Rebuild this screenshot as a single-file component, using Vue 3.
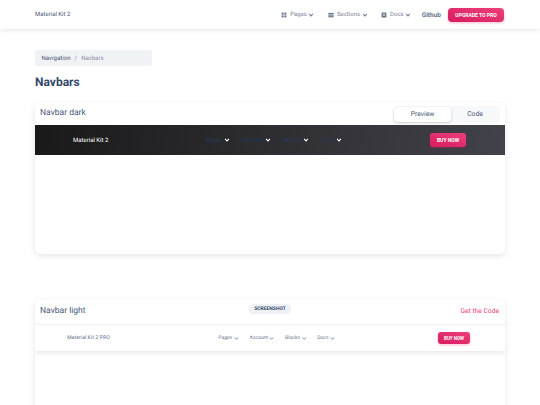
<template>
  <div class="page">
    <header class="topbar">
      <span class="brand">Material Kit 2</span>
      <nav class="topnav">
        <a v-for="item in topLinks" :key="item.label" class="toplink">
          <svg class="ico" viewBox="0 0 10 10" v-html="item.icon"></svg>
          <span>{{ item.label }}</span>
          <svg class="chev" viewBox="0 0 10 10"><path d="M1.8 3.2 5 6.6 8.2 3.2" /></svg>
        </a>
        <a class="github">Github</a>
        <button class="btn upgrade">UPGRADE TO PRO</button>
      </nav>
    </header>

    <main class="content">
      <div class="crumbs">
        <span>Navigation</span><i>/</i><span class="current">Navbars</span>
      </div>
      <h1>Navbars</h1>

      <section class="card first">
        <div class="card-head">
          <h2>Navbar dark</h2>
          <div class="tabs">
            <span class="tab active">Preview</span>
            <span class="tab">Code</span>
          </div>
        </div>
        <div class="demo dark">
          <span class="demo-brand">Material Kit 2</span>
          <div class="demo-links">
            <a v-for="l in demoLinks" :key="l">{{ l }}
              <svg class="chev" viewBox="0 0 10 10"><path d="M1.8 3.2 5 6.6 8.2 3.2" /></svg>
            </a>
          </div>
          <button class="btn buy">BUY NOW</button>
        </div>
      </section>

      <section class="card second">
        <div class="card-head light-head">
          <h2>Navbar light</h2>
          <span class="badge">SCREENSHOT</span>
          <a class="get-code">Get the Code</a>
        </div>
        <div class="demo light">
          <span class="demo-brand">Material Kit 2 PRO</span>
          <div class="demo-links">
            <a v-for="l in demoLinks" :key="l">{{ l }}
              <svg class="chev" viewBox="0 0 10 10"><path d="M1.8 3.2 5 6.6 8.2 3.2" /></svg>
            </a>
          </div>
          <button class="btn buy small">BUY NOW</button>
        </div>
      </section>
    </main>
  </div>
</template>

<script setup>
const topLinks = [
  {
    label: 'Pages',
    icon: '<rect x="1" y="1" width="3.4" height="3.4"/><rect x="5.6" y="1" width="3.4" height="3.4"/><rect x="1" y="5.6" width="3.4" height="3.4"/><rect x="5.6" y="5.6" width="3.4" height="3.4"/>',
  },
  {
    label: 'Sections',
    icon: '<rect x="0.5" y="1.5" width="9" height="2"/><rect x="0.5" y="4.2" width="9" height="2"/><rect x="0.5" y="6.9" width="9" height="2"/>',
  },
  {
    label: 'Docs',
    icon: '<path fill-rule="evenodd" d="M1 1h8v8H1zM3 3v1h4V3zM3 5v1h4V5z"/>',
  },
]
const demoLinks = ['Pages', 'Account', 'Blocks', 'Docs']
</script>

<style>
html,
body {
  margin: 0;
  background: #fff;
  overflow: hidden;
}
</style>

<style scoped>
.page {
  width: 540px;
  height: 405px;
  overflow: hidden;
  font-family: Roboto, "Liberation Sans", sans-serif;
  color: #344767;
  text-rendering: geometricPrecision;
}
.topbar {
  height: 29px;
  box-sizing: border-box;
  padding: 0 36px 0 35px;
  display: flex;
  align-items: center;
  justify-content: space-between;
  box-shadow: 0 1px 5px rgba(0, 0, 0, 0.1);
}
.brand {
  font-size: 6px;
  color: #4b5875;
}
.topnav {
  display: flex;
  align-items: center;
}
.toplink {
  display: flex;
  align-items: center;
  gap: 1.5px;
  font-size: 6px;
  color: #7b809a;
  margin-right: 13.5px;
}
.toplink:nth-of-type(3) {
  margin-right: 10.5px;
}
.ico {
  width: 6px;
  height: 6px;
  margin-right: 1.5px;
  fill: #67748e;
}
.chev {
  width: 6px;
  height: 6px;
  fill: none;
  stroke: currentColor;
  stroke-width: 1.7;
}
.github {
  font-size: 6.5px;
  font-weight: 700;
  color: #67748e;
  margin-right: 7px;
}
.btn {
  border: 0;
  padding: 0;
  font-family: inherit;
  font-weight: 700;
  color: #fff;
  background: linear-gradient(195deg, #ec407a, #d81b60);
  box-shadow: 0 1px 3px rgba(233, 30, 99, 0.3);
}
.upgrade {
  width: 56px;
  height: 14px;
  border-radius: 4px;
  font-size: 5px;
}
.content {
  width: 470px;
  margin: 0 auto;
  padding-top: 21px;
}
.crumbs {
  width: 117px;
  height: 16px;
  box-sizing: border-box;
  padding-left: 6.5px;
  display: flex;
  align-items: center;
  background: #f0f2f5;
  border-radius: 2px;
  font-size: 6.1px;
  color: #495675;
}
.crumbs i {
  font-style: normal;
  color: #8a90a5;
  margin: 0 4px;
}
.current {
  color: #8a90a5;
}
h1 {
  margin: 8px 0 0;
  font-size: 12px;
  line-height: 16px;
  font-weight: 700;
}
.card {
  border-radius: 5px;
  background: #fff;
  box-shadow: 0 2px 6px rgba(0, 0, 0, 0.1);
  overflow: hidden;
}
.first {
  margin-top: 13px;
  height: 151px;
}
.second {
  margin-top: 46px;
  height: 120px;
}
.card-head {
  height: 22px;
  padding: 0 5px 2px;
  box-sizing: border-box;
  display: flex;
  align-items: center;
  justify-content: space-between;
}
h2 {
  margin: 0;
  font-size: 8.5px;
  font-weight: 400;
  color: #495675;
}
.tabs {
  display: flex;
  width: 107px;
  height: 17px;
  margin-top: 2px;
  padding: 1px;
  box-sizing: border-box;
  background: #f6f8fa;
  border-radius: 4px;
}
.tab {
  flex: 1;
  display: flex;
  align-items: center;
  justify-content: center;
  font-size: 6.8px;
  color: #495675;
}
.tab.active {
  flex: 0 0 57px;
  background: #fff;
  border-radius: 4px;
  box-shadow: 0 1px 3px rgba(0, 0, 0, 0.18);
}
.demo {
  display: flex;
  align-items: center;
}
.dark {
  height: 30px;
  background: linear-gradient(100deg, #191919, #42424a);
  padding: 0 39px 0 38px;
  box-sizing: border-box;
}
.dark .demo-brand {
  color: #fff;
  font-size: 6px;
}
.demo-links {
  display: flex;
}
.demo-links a {
  display: flex;
  align-items: center;
  gap: 1.5px;
  font-size: 6px;
}
.buy {
  margin-left: auto;
  font-size: 5px;
  border-radius: 3px;
}
.dark .demo-links {
  gap: 12px;
  margin-left: 97px;
}
.dark .demo-links a {
  color: #253a5e;
}
.dark .chev {
  color: #fff;
}
.dark .buy {
  width: 36px;
  height: 14px;
}
.light-head {
  height: 25px;
  padding-bottom: 3px;
  position: relative;
  border-bottom: 1px solid #f0f2f5;
}
.badge {
  position: absolute;
  left: 214px;
  top: 4px;
  width: 42px;
  height: 10px;
  border-radius: 4px;
  background: #eef1f6;
  font-size: 5px;
  font-weight: 700;
  display: flex;
  align-items: center;
  justify-content: center;
}
.get-code {
  font-size: 6.7px;
  color: #ec407a;
  margin-right: 1px;
}
.light {
  height: 26px;
  padding: 0 35px 0 32px;
  box-sizing: border-box;
  box-shadow: 0 2px 5px rgba(0, 0, 0, 0.1);
}
.light .demo-brand {
  font-size: 5.3px;
  color: #67748e;
}
.light .demo-links {
  gap: 10.7px;
  margin-left: 108.5px;
}
.light .demo-links a {
  color: #67748e;
  font-size: 5px;
}
.light .chev {
  width: 5px;
  height: 5px;
}
.small {
  width: 32px;
  height: 12px;
  font-size: 4.5px;
}
</style>
